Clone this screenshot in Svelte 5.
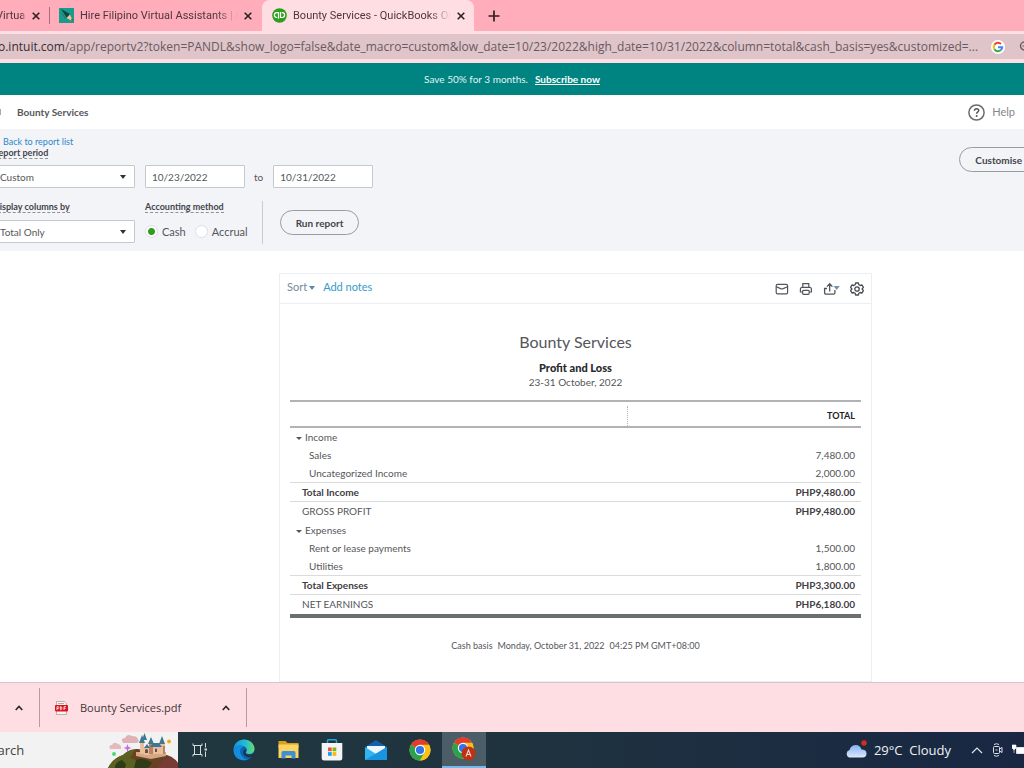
<script lang="ts">
	interface Row {
		kind: 'group' | 'detail' | 'total' | 'summary';
		label: string;
		amount?: string;
	}

	const rows: Row[] = [
		{ kind: 'group', label: 'Income' },
		{ kind: 'detail', label: 'Sales', amount: '7,480.00' },
		{ kind: 'detail', label: 'Uncategorized Income', amount: '2,000.00' },
		{ kind: 'total', label: 'Total Income', amount: 'PHP9,480.00' },
		{ kind: 'summary', label: 'GROSS PROFIT', amount: 'PHP9,480.00' },
		{ kind: 'group', label: 'Expenses' },
		{ kind: 'detail', label: 'Rent or lease payments', amount: '1,500.00' },
		{ kind: 'detail', label: 'Utilities', amount: '1,800.00' },
		{ kind: 'total', label: 'Total Expenses', amount: 'PHP3,300.00' },
		{ kind: 'summary', label: 'NET EARNINGS', amount: 'PHP6,180.00' }
	];

	let period = $state('Custom');
	let columns = $state('Total Only');
	let from = $state('10/23/2022');
	let to = $state('10/31/2022');
	let method = $state('cash');
</script>

{#snippet cross()}
	<svg width="8" height="8" viewBox="0 0 8 8"><path d="M.7.7l6.6 6.6M7.3.7L.7 7.3" stroke="#2b2023" stroke-width="1.6" /></svg>
{/snippet}

{#snippet chevron()}
	<svg width="8" height="6" viewBox="0 0 8 6"><path d="M.7 5L4 1.5 7.3 5" fill="none" stroke="#2b2526" stroke-width="1.6" /></svg>
{/snippet}

{#snippet chrome()}
	<circle cx="11" cy="11" r="10.5" fill="#fbc116" />
	<path d="M11 11L1.9 5.75A10.5 10.5 0 0 1 20.1 5.75z" fill="#e33b2e" />
	<path d="M11 11L1.9 5.75A10.5 10.5 0 0 0 11 21.5l4.6-7.9z" fill="#2ba24c" />
	<path d="M11 5.75h9.1A10.5 10.5 0 0 1 11 21.5l4.6-7.9z" fill="#fbc116" />
	<circle cx="11" cy="11" r="5.2" fill="#fff" />
	<circle cx="11" cy="11" r="4.1" fill="#2d75e8" />
{/snippet}

<div class="screen">
	<div class="tabs">
		<div class="tab tab-first">
			<span class="tab-title">Virtual</span>
			<button aria-label="Close tab">{@render cross()}</button>
		</div>
		<div class="tab tab-second">
			<svg width="15" height="15" viewBox="0 0 15 15">
				<path d="M0 0h15v15H0z" fill="#199c8e" />
				<path d="M2 1l9 5-3 4z" fill="#10443f" />
				<path d="M1 3l7 7-2 1z" fill="#257e73" />
				<path d="M7.5 10l3.500-3.500 3 7z" fill="#f3c493" />
				<path d="M12 12l2 1.5-1-3z" fill="#333" />
			</svg>
			<span class="tab-title">Hire Filipino Virtual Assistants | Fi</span>
			<button aria-label="Close tab">{@render cross()}</button>
		</div>
		<div class="tab active">
			<svg width="15" height="15" viewBox="0 0 15 15">
				<circle cx="7.5" cy="7.5" r="7.3" fill="#2ca01c" />
				<g fill="none" stroke="#fff" stroke-width="1.2">
					<path d="M6.5 10.8V4.7H4.8a2.2 2.2 0 0 0 0 4.8h.5" />
					<path d="M8.5 4v5.5h1.7a2.2 2.2 0 0 0 0-4.8h-.5" />
				</g>
			</svg>
			<span class="tab-title">Bounty Services - QuickBooks Onl</span>
			<button aria-label="Close tab">{@render cross()}</button>
		</div>
		<button class="new-tab" aria-label="New tab">
			<svg width="12" height="12" viewBox="0 0 12 12"><path d="M6 .5v11M.5 6h11" stroke="#2b2023" stroke-width="1.7" /></svg>
		</button>
	</div>

	<div class="toolbar">
		<div class="address">
			<span class="url"><b>o.intuit.com</b>/app/reportv2?token=PANDL&show_logo=false&date_macro=custom&low_date=10/23/2022&high_date=10/31/2022&column=total&cash_basis=yes&customized=...</span>
			<svg class="google" width="14" height="14" viewBox="0 0 14 14">
				<circle cx="7" cy="7" r="7" fill="#fff" />
				<g fill="none" stroke-width="2">
					<path d="M3.4 4.8A4.2 4.2 0 0 1 10 4" stroke="#ea4335" />
					<path d="M3.4 9.2a4.2 4.2 0 0 1 0-4.4" stroke="#fbbc05" />
					<path d="M9.8 10.1a4.2 4.2 0 0 1-6.4-.9" stroke="#34a853" />
					<path d="M7 7.2h4.2a4.2 4.2 0 0 1-1.4 2.9" stroke="#4285f4" />
				</g>
			</svg>
			<svg width="12" height="12" viewBox="0 0 12 12"><circle cx="5.5" cy="5" r="4" fill="none" stroke="#6a5b60" stroke-width="1.4" /><path d="M3.5 5h4" stroke="#6a5b60" /></svg>
		</div>
	</div>

	<div class="promo">
		<span>Save 50% for 3 months.</span>
		<a href="#subscribe">Subscribe now</a>
	</div>

	<header class="company">
		<i class="menu-edge"></i>
		<strong>Bounty Services</strong>
		<button class="help">
			<svg width="17" height="17" viewBox="0 0 17 17">
				<circle cx="8.5" cy="8.5" r="7.6" fill="none" stroke="#6b6c72" stroke-width="1.5" />
				<path d="M6.4 6.8c.1-1.4 1-2.1 2.2-2.1s2.1.8 2.1 1.9c0 1.5-2.1 1.6-2.1 3.1" fill="none" stroke="#55565c" stroke-width="1.5" />
				<circle cx="8.6" cy="11.9" r="1" fill="#55565c" />
			</svg>
			Help
		</button>
	</header>

	<section class="filters">
		<form onsubmit={(e) => e.preventDefault()}>
			<a class="back" href="#reports">Back to report list</a>
			<label class="caption edge" for="period"><span>Report period</span></label>
			<div class="line">
				<div class="select">
					<select id="period" bind:value={period}>
						<option>Custom</option>
						<option>This month</option>
					</select>
					<i class="arrow"></i>
				</div>
				<input class="date" type="text" aria-label="From date" bind:value={from} />
				<label class="to" for="to-date">to</label>
				<input class="date" id="to-date" type="text" bind:value={to} />
			</div>
			<div class="line second">
				<div class="field">
					<label class="caption edge" for="columns"><span>Display columns by</span></label>
					<div class="select">
						<select id="columns" bind:value={columns}>
							<option>Total Only</option>
							<option>Months</option>
						</select>
						<i class="arrow"></i>
					</div>
				</div>
				<fieldset>
					<legend class="caption"><span>Accounting method</span></legend>
					<div class="radios">
						<label><input type="radio" value="cash" bind:group={method} />Cash</label>
						<label><input type="radio" value="accrual" bind:group={method} />Accrual</label>
					</div>
				</fieldset>
				<div class="run">
					<button class="pill">Run report</button>
				</div>
			</div>
		</form>
		<button class="pill customise">Customise</button>
	</section>

	<main>
		<article class="report">
			<div class="report-bar">
				<button class="sort">Sort<i class="arrow"></i></button>
				<a href="#notes">Add notes</a>
				<div class="actions">
					<button aria-label="Email">
						<svg width="14" height="14" viewBox="0 0 14 14" fill="none" stroke="#50555c" stroke-width="1.2"><rect x="1.2" y="2.4" width="11.4" height="9.4" rx="1.4" /><path d="M1.4 4.8l4.2 1.8q1.3.5 2.6 0l4.2-1.8" /></svg>
					</button>
					<button aria-label="Print">
						<svg width="14" height="14" viewBox="0 0 14 14" fill="none" stroke="#50555c" stroke-width="1.2"><path d="M3.8 5.4V1.6h6v3.8M3.6 10H1.4V7a1.6 1.6 0 0 1 1.6-1.6h7.8A1.6 1.6 0 0 1 12.4 7v3h-2.2" /><rect x="3.6" y="8.3" width="6.6" height="4" rx="1" /></svg>
					</button>
					<button aria-label="Export">
						<svg width="17" height="14" viewBox="0 0 17 14" fill="none" stroke="#50555c" stroke-width="1.3"><path d="M6.7 9.5V2M4 4.6L6.7 1.7l2.7 2.9M4 6.5H1.6v4.3A1.4 1.4 0 0 0 3 12.2h7.5a1.4 1.4 0 0 0 1.4-1.4V8" /><path d="M10.5 4h6.3l-3.1 4z" fill="#7193b3" stroke="none" /></svg>
					</button>
					<button aria-label="Settings">
						<svg width="14" height="14" viewBox="0 0 14 14" fill="none" stroke="#464b52" stroke-width="1.3" stroke-linejoin="round"><path d="M5.6 1h2.8l.5 1.8 1.3.7 1.8-.5 1.4 2.4L12.1 7l1.3 1.6-1.4 2.4-1.8-.5-1.3.7-.5 1.8H5.6l-.5-1.8-1.3-.7-1.8.5L.6 8.6 1.9 7 .6 5.4 2 3l1.8.5 1.3-.7z" /><circle cx="7" cy="7" r="2.2" /></svg>
					</button>
				</div>
			</div>

			<div class="heading">
				<h1>Bounty Services</h1>
				<h2>Profit and Loss</h2>
				<p>23-31 October, 2022</p>
			</div>

			<table>
				<thead>
					<tr>
						<th class="name" aria-label="Account"></th>
						<th class="amount"><span>TOTAL</span></th>
					</tr>
				</thead>
				<tbody>
					{#each rows as row}
						<tr class={row.kind}>
							<td>{#if row.kind === 'group'}<i class="arrow"></i>{/if}{row.label}</td>
							<td class="amount">{row.amount ?? ''}</td>
						</tr>
					{/each}
				</tbody>
			</table>

			<footer>
				<span>Cash basis</span>
				<span>Monday, October 31, 2022</span>
				<span>04:25 PM GMT+08:00</span>
			</footer>
		</article>
	</main>

	<div class="downloads">
		<div class="download previous">
			<button aria-label="More options">{@render chevron()}</button>
		</div>
		<div class="download">
			<svg width="13" height="14" viewBox="0 0 13 14">
				<path d="M1.5.5h8l2 2v11h-10z" fill="#f6f3f2" stroke="#a9a1a0" stroke-width=".8" />
				<path d="M3 2.5h6" stroke="#999" stroke-width=".8" />
				<rect y="4" width="13" height="6.5" rx="1" fill="#d9141e" />
				<path d="M2 9V5.7h1.3q1 .9 0 1.8H2M5.4 5.7v3h.8q1.6-1.5 0-3zM9 9V5.7h2M9 7.3h1.7" fill="none" stroke="#fff" stroke-width=".8" />
			</svg>
			<span>Bounty Services.pdf</span>
			<button aria-label="Download options">{@render chevron()}</button>
		</div>
	</div>

	<nav class="taskbar">
		<div class="search">
			<span>Search</span>
			<svg width="70" height="36" viewBox="0 0 70 36">
				<path d="M2 17q-2-4 2-4 2-4 6-1 4 1 3 5z" fill="#e3babd" />
				<path d="M15 11q-3-5 2-5 2-5 7-2 5 0 6 3 2 4-2 4z" fill="#dfb2b8" />
				<path d="M19.5 12l1 3 3 1-3 1-1 3.5-1-3.5-3-1 3-1z" fill="#c468ea" />
				<circle cx="6" cy="22" r="1.9" fill="#45d774" />
				<circle cx="61" cy="9.5" r="1.9" fill="#f5a90d" />
				<path d="M0 36q5-10 15-13 7-7 15-6l23 5q13 1 17 10v4z" fill="#684124" />
				<path d="M0 36q5-10 15-13 5-5 12-5l-5 8 8 3-3 7z" fill="#5c6122" />
				<path d="M7 36q0-6 7-8l4 4-1 4zM28 28q9-3 16 3l-4 5H26z" fill="#303b17" />
				<path d="M50 36q3-10 12-10 6 1 8 5v5z" fill="#783c37" />
				<path d="M28 20h30v4l-15 3-15-3z" fill="#d7a783" />
				<path d="M32 10h4v12h-4zM41 12h13v10H41zM36 15h6v8h-6zM52 11h5v11h-5z" fill="#e7bf9b" />
				<path d="M41 12h4v10h-4zM55 14h2v8h-2z" fill="#b98466" />
				<path d="M31 11l3-8 3 8zM34 8l2.500-7L39 8zM40 12l3-7 3 7zM42 15l3-4h6l3 4zM51 12l3-8 3 8zM36 16l3-4 3 4z" fill="#3d7790" />
				<path d="M37 21v-3q1.5-2 3 0v3zM47 20v-3q1-1 2 0v3z" fill="#6d4e4a" />
			</svg>
		</div>
		<button aria-label="Task view">
			<svg width="16" height="14" viewBox="0 0 16 14" fill="none" stroke="#d5dadd"><path d="M1 .5v2h9v-2M1 13.5v-2h9v2M2.5 2.5v9M8.5 2.5v9M13.5 0v4.5M13.5 8.5V14" /><path d="M12.5 6.5h2.5" stroke-width="2" /></svg>
		</button>
		<button aria-label="Edge">
			<svg width="22" height="22" viewBox="0 0 22 22">
				<defs>
					<linearGradient id="edge-wave"><stop offset="0" stop-color="#1593dc" /><stop offset=".55" stop-color="#22bcd3" /><stop offset="1" stop-color="#69dd69" /></linearGradient>
				</defs>
				<circle cx="11" cy="11" r="10.5" fill="#0c63b3" />
				<path d="M.6 10C1 4.5 5.6.5 11 .5c6 0 10.5 4.5 10.5 9 0 4-3 5.5-5.5 5.5-2.2 0-3.6-.9-3.2-1.7 1.4-1.3 1.4-3.3.2-4.6C10.2 5.8 3.5 5.5.6 10z" fill="url(#edge-wave)" />
				<path d="M.6 10C3.5 5.5 9 6 11 7.5 6.5 8.5 6 13.5 9 17c1.5 2 3.5 3.5 6 3.5C8 23 0 19 .6 10z" fill="#168ddc" />
				<path d="M12.7 13.5c-.5 1.5 4.3 3.6 8.8.2h1.5v2l-3 1.8q-4 2-8-.5-2.5-2-1.5-5 1-2.5 2.8-1.5 0 1.500-.6 3z" fill="#203541" />
			</svg>
		</button>
		<button aria-label="File Explorer">
			<svg width="21" height="18" viewBox="0 0 21 18"><path d="M.5 0h7l2 2h11v5H.5z" fill="#dd9f1c" /><path d="M.5 3.5h20V17H.5z" fill="#fcd462" /><path d="M3.5 17.5v-6q0-1.5 1.5-1.5h11q1.5 0 1.5 1.5v6h-4v-3h-6v3z" fill="#3c90d3" /></svg>
		</button>
		<button aria-label="Microsoft Store">
			<svg width="22" height="22" viewBox="0 0 22 22"><path d="M6.5 5V1.7q0-.9.9-.9h7.2q.9 0 .9.9V5" fill="none" stroke="#23a5dc" stroke-width="1.5" /><path d="M.7 4h20.6v15q0 2.5-2.5 2.5H3.2Q.7 21.5.7 19z" fill="#f3f4f5" /><path d="M7 8.5h3.7v3.7H7z" fill="#ef5131" /><path d="M11.6 8.5h3.7v3.7h-3.7z" fill="#7db90b" /><path d="M7 13.1h3.7v3.7H7z" fill="#15a2e8" /><path d="M11.6 13.1h3.7v3.7h-3.7z" fill="#fcb80a" /></svg>
		</button>
		<button aria-label="Mail">
			<svg width="22" height="20" viewBox="0 0 22 20"><path d="M0 7L11 0l11 7v13H0z" fill="#1560aa" /><path d="M2 6h18v9H2z" fill="#eef5fb" /><path d="M0 7l11 7 11-7v13H0z" fill="#2fb5ef" /><path d="M0 20L22 7v13z" fill="#1894e0" /></svg>
		</button>
		<button aria-label="Chrome">
			<svg width="22" height="22" viewBox="0 0 22 22">{@render chrome()}</svg>
		</button>
		<button class="current" aria-label="Chrome, profile A">
			<svg width="24" height="24" viewBox="0 0 24 24">
				{@render chrome()}
				<circle cx="16.5" cy="16.5" r="7" fill="#bd3213" />
				<path d="M14 19.5l2.5-6.5 2.5 6.5M15 17.5h3" fill="none" stroke="#f5d6ca" stroke-width="1.1" />
			</svg>
		</button>
		<div class="tray">
			<svg width="22" height="20" viewBox="0 0 22 20">
				<defs><linearGradient id="cloud" x2="0" y2="1"><stop offset="0" stop-color="#83b2f3" /><stop offset="1" stop-color="#dce9fb" /></linearGradient></defs>
				<path d="M4 17.5a4 4 0 0 1 .5-7.5Q6 5 11 5q4 0 5.5 4.5 5 0 5 4 0 4-4 4z" fill="url(#cloud)" />
				<circle cx="19" cy="3" r="2.7" fill="#d52c1c" />
			</svg>
			<span>29°C&nbsp; Cloudy</span>
			<svg class="up" width="12" height="8" viewBox="0 0 12 8"><path d="M1 7l5-5 5 5" fill="none" stroke="#e2e5ea" stroke-width="1.2" /></svg>
			<svg width="11" height="14" viewBox="0 0 11 14" fill="none" stroke="#dfe2e8"><path d="M2 1.5q2.500-1.500 5 0M2 12.5q2.500 1.500 5 0" /><rect x="1.5" y="3.5" width="6" height="7" rx="1" /><path d="M3.5 7h2M7.5 6L10 4.5v5L7.5 8" /></svg>
			<svg class="battery" width="16" height="12" viewBox="0 0 16 12"><path d="M4.500 3.500h12v6h-12z" fill="#fff" stroke="#dfe2e8" /><path d="M0 1h4v3L2 6 0 4zM2 6v3" fill="#fff" stroke="#fff" stroke-width=".6" /></svg>
		</div>
	</nav>
</div>

<style>
	:global(body) {
		margin: 0;
	}

	.screen {
		display: flex;
		flex-direction: column;
		min-height: 100vh;
		overflow: hidden;
		background: #fff;
		color: #55565b;
		font-family: Lato, 'Liberation Sans', sans-serif;
		font-size: 10px;
		line-height: 14px;
	}

	.screen * {
		box-sizing: border-box;
	}

	button {
		padding: 0;
		border: 0;
		background: none;
		color: inherit;
		font: inherit;
		cursor: pointer;
	}

	svg {
		display: block;
		flex: none;
	}

	a {
		color: #2b88cb;
		text-decoration: none;
	}

	.arrow {
		display: inline-block;
		border: 3px solid transparent;
		border-top: 4px solid currentColor;
		border-bottom: 0;
	}

	/* Browser chrome */
	.toolbar,
	.downloads,
	.taskbar {
		font-family: 'Open Sans', 'Noto Sans', sans-serif;
	}

	.tabs {
		display: flex;
		height: 31px;
		background: #ffadbb;
		color: #4b373d;
		font-family: Roboto, sans-serif;
		font-size: 11px;
	}

	.tab {
		display: flex;
		align-items: center;
		gap: 6px;
		width: 212px;
		padding: 0 10px;
	}

	.tab-first {
		width: 50px;
		padding: 0 10px 0 0;
		justify-content: flex-end;
	}

	.tab-first .tab-title {
		flex: none;
		width: 30px;
	}

	.tab-second::before {
		content: '';
		width: 1px;
		height: 17px;
		margin: 0 3px 0 -11px;
		background: #a67079;
	}

	.tab.active {
		padding-right: 9px;
		border-radius: 8px 8px 0 0;
		background: #ffdee3;
	}

	.tab-title {
		flex: 1;
		overflow: hidden;
		white-space: nowrap;
		mask-image: linear-gradient(90deg, #000 86%, transparent);
	}

	.new-tab {
		padding: 0 14px;
	}

	.toolbar {
		padding: 3px 0 4px;
		background: #ffdee3;
	}

	.address {
		display: flex;
		align-items: center;
		height: 25px;
		margin-right: -7px;
		background: #dfc4c9;
		color: #6a5a5f;
		font-size: 12px;
	}

	.url {
		flex: 1;
		margin-left: -2px;
		overflow: hidden;
		white-space: nowrap;
	}

	.url b {
		color: #392c30;
		font-weight: 400;
	}

	.google {
		margin-right: 14px;
	}

	/* App header */
	.promo {
		display: flex;
		align-items: center;
		justify-content: center;
		gap: 7px;
		height: 32px;
		background: #008481;
		color: #e2f3f2;
	}

	.promo a {
		color: #fff;
		font-weight: 700;
		text-decoration: underline;
	}

	.company {
		display: flex;
		align-items: center;
		height: 34px;
		padding-right: 9px;
	}

	.company strong {
		margin-left: 16px;
	}

	.menu-edge {
		width: 1px;
		height: 6px;
		background: #aaa;
	}

	.help {
		display: flex;
		align-items: center;
		gap: 7px;
		margin-left: auto;
		color: #85868b;
		font-size: 11px;
	}

	/* Report filters */
	.filters {
		display: flex;
		align-items: flex-start;
		justify-content: space-between;
		height: 122px;
		padding-top: 7px;
		background: #f3f4f8;
	}

	form {
		margin-left: -9px;
	}

	.back {
		display: block;
		margin-left: 12px;
		font-size: 9px;
		line-height: 11px;
	}

	.caption {
		display: block;
		padding: 0;
		color: #43444a;
		font-size: 9px;
		font-weight: 700;
		line-height: 11px;
	}

	.caption.edge {
		padding-left: 2px;
	}

	.caption span {
		border-bottom: 1px dashed #8d9096;
	}

	.line {
		display: flex;
		align-items: center;
		margin-top: 7px;
	}

	.line.second {
		align-items: flex-start;
		margin-top: 13px;
	}

	.select {
		position: relative;
		width: 144px;
	}

	.select .arrow {
		position: absolute;
		top: 10px;
		right: 9px;
		color: #303136;
		pointer-events: none;
	}

	select,
	.date {
		display: block;
		height: 23px;
		border: 1px solid #c5c8ce;
		border-radius: 1px;
		background: #fff;
		color: #55565b;
		font: 10px Lato, sans-serif;
		appearance: none;
	}

	select {
		width: 100%;
		padding: 0 8px;
	}

	.date {
		width: 100px;
		margin-left: 10px;
		padding: 0 6px;
	}

	.to {
		margin-left: 9px;
	}

	.to + .date {
		margin-left: 10px;
	}

	.field .select,
	.radios {
		margin-top: 8px;
	}

	fieldset {
		margin: 0 0 0 10px;
		padding: 0;
		border: 0;
	}

	.radios {
		display: flex;
		gap: 9px;
		height: 23px;
		font-size: 11px;
	}

	.radios label {
		display: flex;
		align-items: center;
		gap: 4px;
	}

	.radios input {
		width: 13px;
		height: 13px;
		margin: 0;
		border: 1px solid #dcdfe2;
		border-radius: 50%;
		background: #fff;
		appearance: none;
	}

	.radios input:checked {
		background: radial-gradient(circle, #2ca01c 3px, #fff 4px);
	}

	.run {
		display: flex;
		align-items: center;
		height: 43px;
		margin-left: 14px;
		padding-left: 17px;
		border-left: 1px solid #c9cbd1;
	}

	.pill {
		height: 25px;
		padding: 0 15px;
		border: 1px solid #9a9ca2;
		border-radius: 13px;
		color: #43444a;
		font-weight: 700;
	}

	.customise {
		margin: 11px -14px 0 0;
	}

	/* Report */
	main {
		flex: 1;
		padding: 22px 152px 0 279px;
	}

	.report {
		height: 100%;
		padding-bottom: 28px;
		border: 1px solid #eceef5;
	}

	.report-bar {
		display: flex;
		align-items: flex-start;
		gap: 8px;
		height: 30px;
		padding: 6px 7px 0;
		border-bottom: 1px solid #eceef5;
		font-size: 11px;
	}

	.report-bar > a {
		color: #359bc9;
	}

	.sort {
		color: #74899b;
	}

	.sort .arrow {
		margin: 0 0 1px 2px;
		color: #5b87a9;
	}

	.actions {
		display: flex;
		gap: 10px;
		margin: 2px 0 0 auto;
	}

	.heading {
		padding-top: 28px;
		text-align: center;
	}

	h1,
	h2,
	.heading p {
		margin: 0;
	}

	h1 {
		font-size: 16px;
		font-weight: 400;
		line-height: 20px;
	}

	h2 {
		margin-top: 9px;
		color: #27282c;
		font-size: 11px;
		font-weight: 900;
		line-height: 14px;
	}

	table {
		width: calc(100% - 20px);
		margin: 11px 10px 0;
		border-top: 2px solid #b0b2b3;
		border-bottom: 4px solid #6c6f6f;
		border-spacing: 0;
		font-size: 10px;
		line-height: 18px;
	}

	th {
		padding: 4px 0 0;
		border-bottom: 2px solid #b0b2b3;
		color: #202124;
		font-size: 9px;
		line-height: 20px;
	}

	.name {
		width: 59%;
	}

	th span {
		display: block;
		padding-right: 6px;
		border-left: 1px dotted #b0b2b3;
	}

	td {
		padding: 0 6px 0 12px;
	}

	.amount {
		text-align: right;
	}

	th.amount {
		padding-right: 0;
	}

	.group td:first-child {
		padding-left: 6px;
	}

	.group .arrow {
		margin: 0 3px 1px 0;
		border-top-width: 3px;
	}

	.detail td:first-child {
		padding-left: 19px;
	}

	.total td {
		border: solid #d9dbdc;
		border-width: 1px 0;
		color: #3f4045;
		font-weight: 700;
	}

	.summary td {
		padding-bottom: 1px;
	}

	.summary .amount {
		color: #3f4045;
		font-weight: 700;
	}

	footer {
		display: flex;
		justify-content: center;
		gap: 5px;
		margin-top: 21px;
		font-size: 9px;
	}

	/* Downloads */
	.downloads {
		display: flex;
		height: 50px;
		padding: 5px 0;
		border-top: 1px solid #d9c3c8;
		background: #ffdee3;
		color: #40363a;
		font-size: 11px;
	}

	.download {
		display: flex;
		align-items: center;
		width: 207px;
		padding: 0 16px 0 15px;
		border-right: 1px solid #b59ca1;
	}

	.download.previous {
		justify-content: flex-end;
		width: 40px;
	}

	.download span {
		margin: 0 auto 0 12px;
	}

	/* Taskbar */
	.taskbar {
		display: flex;
		height: 36px;
		background: linear-gradient(90deg, #203940, #1f333f 50%, #192743);
	}

	.search {
		display: flex;
		align-items: center;
		justify-content: space-between;
		width: 178px;
		background: #f2f2f2;
		color: #444;
		font-size: 13px;
	}

	.search span {
		margin-left: -17px;
	}

	.taskbar > button {
		display: flex;
		align-items: center;
		justify-content: center;
		width: 44px;
	}

	.taskbar > .current {
		border-bottom: 2px solid #75b8ed;
		background: #4b5d67;
	}

	.tray {
		display: flex;
		align-items: center;
		margin: 0 -4px 0 auto;
		color: #f0f2f5;
		font-size: 13px;
	}

	.tray span {
		margin-left: 7px;
	}

	.up {
		margin: 0 9px 0 20px;
	}

	.battery {
		margin-left: 9px;
	}
</style>
